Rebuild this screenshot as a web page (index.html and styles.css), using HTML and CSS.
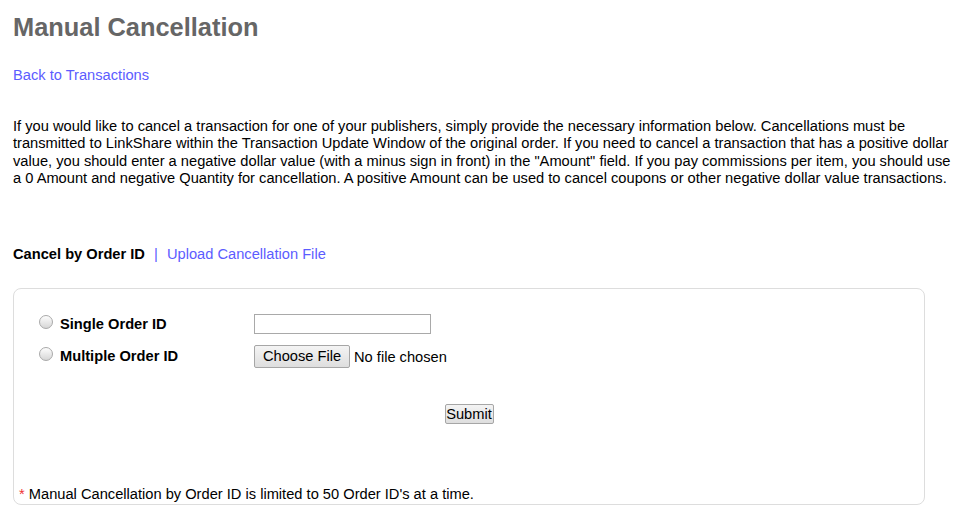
FILE: index.html
```html
<!DOCTYPE html>
<html lang="en">
<head>
<meta charset="UTF-8">
<title>Manual Cancellation</title>
<link rel="stylesheet" href="styles.css">
</head>
<body>

<div class="page">
    <h1>Manual Cancellation</h1>
    <p class="back"><a href="#">Back to Transactions</a></p>

    <p class="intro">If you would like to cancel a transaction for one of your publishers, simply provide the necessary information below. Cancellations must be transmitted to LinkShare within the Transaction Update Window of the original order. If you need to cancel a transaction that has a positive dollar value, you should enter a negative dollar value (with a minus sign in front) in the "Amount" field. If you pay commissions per item, you should use a 0 Amount and negative Quantity for cancellation. A positive Amount can be used to cancel coupons or other negative dollar value transactions.</p>

    <div class="tabs">
        <strong>Cancel by Order ID</strong>
        <span class="sep">|</span>
        <a href="#">Upload Cancellation File</a>
    </div>

    <div class="panel">
        <form class="cancel-form">
            <div class="row">
                <label class="choice"><input type="radio" name="mode" value="single"> Single Order ID</label>
                <input type="text" class="order-id">
            </div>
            <div class="row">
                <label class="choice"><input type="radio" name="mode" value="multiple"> Multiple Order ID</label>
                <input type="file" class="order-file">
            </div>
            <div class="actions">
                <input type="submit" value="Submit">
            </div>
        </form>
        <p class="note"><span class="star">*</span> Manual Cancellation by Order ID is limited to 50 Order ID's at a time.</p>
    </div>
</div>

</body>
</html>
```

FILE: styles.css
```css
body {
    margin: 0;
    padding: 0;
    background-color: #fff;
    color: #000;
    font-family: 'Liberation Sans', Arial, sans-serif;
    font-size: 14.67px;
}
a {
    color: #5c5cff;
    text-decoration: none;
}
.page {
    padding: 0 0 0 13px;
    width: 946px;
}
h1 {
    margin: 12px 0 0;
    font-size: 25.4px;
    line-height: 30px;
    color: #666;
}
.back {
    margin: 25px 0 0;
    line-height: 17px;
}
.intro {
    margin: 34px 0 0;
    line-height: 17.3px;
}
.tabs {
    margin-top: 59px;
    line-height: 17px;
}
.tabs .sep {
    color: #5c5cff;
    margin: 0 5px;
}
.panel {
    margin-top: 25px;
    width: 910px;
    border: 1px solid #ddd;
    border-radius: 8px;
}
.cancel-form {
    padding: 23px 25px 0;
}
.row {
    display: flex;
    align-items: center;
    height: 24px;
    margin-bottom: 8px;
}
.choice {
    width: 215px;
    font-weight: bold;
    display: flex;
    align-items: center;
}
.choice input[type="radio"] {
    appearance: none;
    -webkit-appearance: none;
    width: 14px;
    height: 14px;
    margin: 0 7px 0 0;
    border: 1px solid #a9a9a9;
    border-radius: 50%;
    background: linear-gradient(#fdfdfd, #d6d6d6);
    position: relative;
    top: -2px;
}
.order-id {
    width: 177px;
    height: 20px;
    box-sizing: border-box;
    border: 1px solid #a9a9a9;
    padding: 1px 3px;
    margin: 0;
}
.order-file {
    font-family: inherit;
    font-size: 14.67px;
    color: #000;
}
.order-file::file-selector-button {
    width: 96px;
    height: 23px;
    margin-right: 4px;
    font-family: inherit;
    font-size: 14.67px;
    color: #000;
    border: 1px solid #a6a6a6;
    border-radius: 2px;
    background: linear-gradient(#f4f4f4, #dedede);
}
.actions {
    text-align: center;
    padding-top: 28px;
}
.actions input[type="submit"] {
    width: 49px;
    height: 20px;
    padding: 0;
    font-family: inherit;
    font-size: 14.67px;
    color: #000;
    border: 1px solid #a6a6a6;
    border-radius: 2px;
    background: linear-gradient(#f4f4f4, #dedede);
}
.note {
    margin: 62px 0 0;
    padding: 0 5px 1px;
    line-height: 17px;
    font-size: 14.67px;
}
.note .star {
    color: #e33;
}
```
